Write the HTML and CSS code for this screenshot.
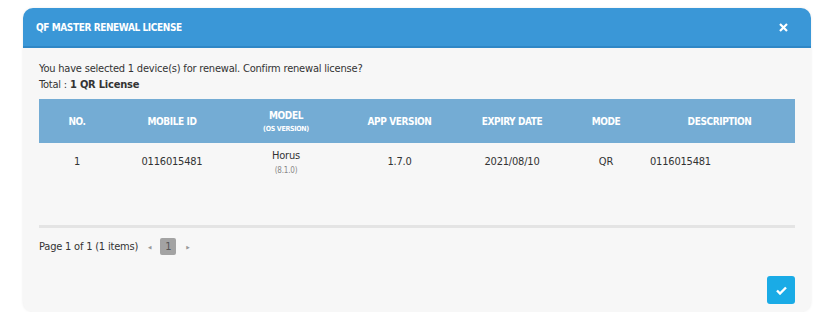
FILE: index.html
```html
<!DOCTYPE html>
<html lang="en">
<head>
  <meta charset="UTF-8" />
  <title>QF Master Renewal License</title>
  <link rel="stylesheet" href="styles.css">
</head>
<body>
  <div class="modal">
    <div class="modal-header">
      <span class="modal-title">QF MASTER RENEWAL LICENSE</span>
      <svg class="close" width="9" height="9" viewBox="0 0 9 9"><path d="M1 1 L8 8 M8 1 L1 8" stroke="#fff" stroke-width="2.2"/></svg>
    </div>
    <div class="modal-body">
      <p class="intro">You have selected 1 device(s) for renewal. Confirm renewal license?<br>Total : <b>1 QR License</b></p>
      <table class="grid">
        <colgroup>
          <col style="width:76px"><col style="width:114px"><col style="width:114px"><col style="width:113px"><col style="width:112px"><col style="width:76px"><col>
        </colgroup>
        <thead>
          <tr>
            <th>NO.</th>
            <th>MOBILE ID</th>
            <th>MODEL<small>(OS VERSION)</small></th>
            <th>APP VERSION</th>
            <th>EXPIRY DATE</th>
            <th>MODE</th>
            <th>DESCRIPTION</th>
          </tr>
        </thead>
        <tbody>
          <tr>
            <td>1</td>
            <td>0116015481</td>
            <td class="model">Horus<small>(8.1.0)</small></td>
            <td>1.7.0</td>
            <td>2021/08/10</td>
            <td>QR</td>
            <td class="left">0116015481</td>
          </tr>
        </tbody>
      </table>
      <div class="pager">
        <span>Page 1 of 1 (1 items)</span>
        <span class="arrow">&#9664;</span>
        <span class="page">1</span>
        <span class="arrow next">&#9654;</span>
      </div>
      <div class="footer">
        <button class="ok">
          <svg width="11" height="9" viewBox="0 0 11 9"><path d="M1 4.5 L4 7.5 L10 1.5" fill="none" stroke="#fff" stroke-width="2.4"/></svg>
        </button>
      </div>
    </div>
  </div>
</body>
</html>
```
FILE: styles.css
```css
* { box-sizing: border-box; }
body {
  margin: 0;
  background: #ffffff;
  font-family: 'DejaVu Sans Condensed', 'Liberation Sans', sans-serif;
  color: #333333;
  font-size: 11px;
  letter-spacing: -0.2px;
}
.modal {
  margin: 8px 0 0 23px;
  width: 788px;
  height: 304px;
  background: #f7f7f7;
  border-radius: 10px;
  overflow: hidden;
  box-shadow: 0 0 3px rgba(0, 0, 0, 0.08);
}
.modal-header {
  height: 40px;
  background: #3a97d7;
  border-bottom: 2px solid #2f87c6;
  display: flex;
  align-items: center;
  justify-content: space-between;
  padding: 0 23px 0 13px;
  color: #fff;
}
.modal-title { font-weight: 700; font-size: 10px; letter-spacing: -0.4px; }
.modal-body { padding: 13px 16px 0 16px; }
.intro {
  margin: 0 0 6px;
  line-height: 16px;
}
.grid {
  width: 756px;
  border-collapse: collapse;
  table-layout: fixed;
}
.grid th {
  background: #74acd4;
  color: #fff;
  font-weight: 700;
  font-size: 10px;
  letter-spacing: -0.4px;
  height: 44px;
  padding: 0;
  text-align: center;
  line-height: 15px;
}
.grid small { display: block; font-size: 7px; line-height: 12px; }
.grid th small { font-weight: 700; letter-spacing: -0.3px; }
.grid td {
  text-align: center;
  height: 34px;
  padding: 11px 0 0;
  vertical-align: top;
  line-height: 15px;
}
.grid td.model { padding-top: 5px; }
.grid td.model small { font-size: 8px; line-height: 15px; color: #888; }
.grid td.left { text-align: left; padding-left: 6px; }
.pager {
  margin-top: 47px;
  border-top: 3px solid #e4e4e4;
  width: 756px;
  padding-top: 10px;
  display: flex;
  align-items: center;
}
.arrow { font-size: 5px; color: #999; margin-left: 10px; }
.arrow.next { margin-left: 10px; }
.page {
  margin-left: 9px;
  width: 16px;
  height: 17px;
  background: #a3a3a3;
  border-radius: 2px;
  text-align: center;
  line-height: 17px;
  color: #555;
}
.footer {
  width: 756px;
  display: flex;
  justify-content: flex-end;
  margin-top: 21px;
}
.ok {
  width: 28px;
  height: 28px;
  border: none;
  border-radius: 3px;
  background: #1aabe6;
  padding: 0;
  display: flex;
  align-items: center;
  justify-content: center;
}
```
